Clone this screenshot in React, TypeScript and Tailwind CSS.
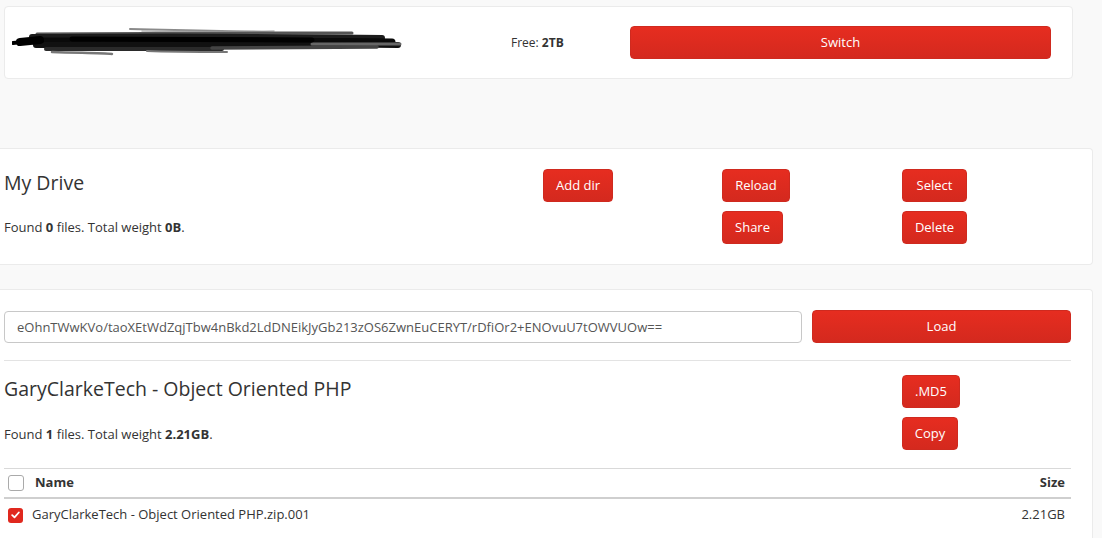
const font = { fontFamily: '"Open Sans", "Liberation Sans", sans-serif' };

function RedButton({ children, className = "" }: { children: React.ReactNode; className?: string }) {
  return (
    <button
      className={`h-[33px] rounded-[4px] border border-[#cf2a1f] bg-gradient-to-b from-[#e62d20] to-[#d4291e] text-[13px] text-white ${className}`}
    >
      {children}
    </button>
  );
}

function Scribble() {
  // redaction scribble over the account name
  return (
    <svg width="390" height="30" viewBox="0 0 390 30" className="block">
      <g fill="none" strokeLinecap="round">
        <path d="M118 1 C160 2 200 3 250 4" stroke="#8a8a8a" strokeWidth="2" />
        <path d="M130 3 C170 4 215 4 262 3" stroke="#b5b5b5" strokeWidth="1.5" />
        <path d="M25 6 C90 5 170 5 250 5 S320 5 340 5" stroke="#555" strokeWidth="3" />
        <path d="M20 9 C80 9 160 8 240 9 S330 9 370 10" stroke="#1c1c1c" strokeWidth="6" />
        <path d="M22 13 C90 13 170 12 250 13 S340 13 380 14" stroke="#0a0a0a" strokeWidth="7" />
        <path d="M24 17 C100 17 180 16 260 17 S340 16 386 17" stroke="#111" strokeWidth="6" />
        <path d="M34 21 C100 21 150 21 210 21" stroke="#2a2a2a" strokeWidth="4" />
        <path d="M200 20 C260 20 320 19 365 19" stroke="#444" strokeWidth="3.5" />
        <path d="M40 24 C70 25 90 25 100 26" stroke="#777" strokeWidth="2.5" />
        <path d="M135 23 C160 24 190 24 215 24" stroke="#777" strokeWidth="2" />
        <path d="M1 15 C10 14 20 13 30 13" stroke="#000" strokeWidth="4" />
        <path d="M8 14 L28 12" stroke="#000" strokeWidth="8" />
        <path d="M300 16 C330 16 360 16 388 16" stroke="#666" strokeWidth="3" />
        <path d="M60 11 C140 11 220 11 300 12" stroke="#000" strokeWidth="5" />
      </g>
    </svg>
  );
}

function Checkbox({ checked }: { checked?: boolean }) {
  if (checked)
    return (
      <span className="flex h-[15px] w-[15px] items-center justify-center rounded-[3px] bg-[#e0281e]">
        <svg width="9" height="8" viewBox="0 0 9 8">
          <path d="M1.2 4.2 L3.5 6.3 L7.8 1.5" fill="none" stroke="white" strokeWidth="1.8" strokeLinecap="round" strokeLinejoin="round" />
        </svg>
      </span>
    );
  return <span className="block h-[16px] w-[16px] rounded-[3px] border border-[#aaa] bg-white" />;
}

export default function App() {
  return (
    <div className="min-h-[538px] bg-[#f9f9f9] pt-[6px] text-[#333]" style={font}>
      {/* account bar */}
      <div className="ml-[4px] flex h-[73px] w-[1069px] items-center rounded-[4px] border border-[#ebebeb] bg-white pl-[7px] pr-[21px]">
        <div className="w-[499px]">
          <Scribble />
        </div>
        <div className="w-[119px] text-[12px]">
          Free: <b>2TB</b>
        </div>
        <RedButton className="flex-1">Switch</RedButton>
      </div>

      {/* my drive */}
      <div className="mt-[69px] flex w-[1093px] rounded-r-[4px] border border-l-0 border-[#ebebeb] bg-white pb-[20px] pl-1 pt-[20px]">
        <div className="w-[539px]">
          <h2 className="text-[19.5px] leading-[28px]">My Drive</h2>
          <p className="mt-[21px] text-[13px] leading-[18px]">
            Found <b>0</b> files. Total weight <b>0B</b>.
          </p>
        </div>
        <div className="w-[179px]">
          <RedButton className="w-[70px]">Add dir</RedButton>
        </div>
        <div className="flex w-[180px] flex-col items-start gap-[9px]">
          <RedButton className="w-[68px]">Reload</RedButton>
          <RedButton className="w-[61px]">Share</RedButton>
        </div>
        <div className="flex flex-col items-start gap-[9px]">
          <RedButton className="w-[65px]">Select</RedButton>
          <RedButton className="w-[65px]">Delete</RedButton>
        </div>
      </div>

      {/* shared link */}
      <div className="mt-[24px] w-[1093px] rounded-tr-[4px] border border-b-0 border-l-0 border-[#ebebeb] bg-white pb-[10px] pl-1 pr-[21px] pt-[20px]">
        <div className="flex items-center gap-[10px]">
          <input
            readOnly
            value="eOhnTWwKVo/taoXEtWdZqjTbw4nBkd2LdDNEikJyGb213zOS6ZwnEuCERYT/rDfiOr2+ENOvuU7tOWVUOw=="
            className="h-[32px] w-[798px] rounded-[4px] border border-[#c8c8c8] px-3 text-[13px] text-[#555] outline-none"
            style={font}
          />
          <RedButton className="flex-1">Load</RedButton>
        </div>
        <div className="mt-[17px] border-t border-[#e3e3e3]" />

        <div className="mt-[14px] flex">
          <div className="w-[898px]">
            <h2 className="text-[19.5px] leading-[28px]">GaryClarkeTech - Object Oriented PHP</h2>
            <p className="mt-[22px] text-[13px] leading-[18px]">
              Found <b>1</b> files. Total weight <b>2.21GB</b>.
            </p>
          </div>
          <div className="flex flex-col items-start gap-[9px]">
            <RedButton className="w-[58px]">.MD5</RedButton>
            <RedButton className="w-[56px]">Copy</RedButton>
          </div>
        </div>

        <table className="mt-[18px] w-full border-t border-[#d9d9d9] text-[13px]">
          <thead>
            <tr className="h-[29px] border-b-2 border-[#cfcfcf]">
              <th className="w-[28px] pl-[4px] align-middle">
                <Checkbox />
              </th>
              <th className="pl-[3px] text-left font-bold">Name</th>
              <th className="pr-[6px] text-right font-bold">Size</th>
            </tr>
          </thead>
          <tbody>
            <tr className="h-[34px]">
              <td className="pl-[4px] align-middle">
                <Checkbox checked />
              </td>
              <td className="text-left">GaryClarkeTech - Object Oriented PHP.zip.001</td>
              <td className="pr-[6px] text-right">2.21GB</td>
            </tr>
          </tbody>
        </table>
      </div>
    </div>
  );
}
